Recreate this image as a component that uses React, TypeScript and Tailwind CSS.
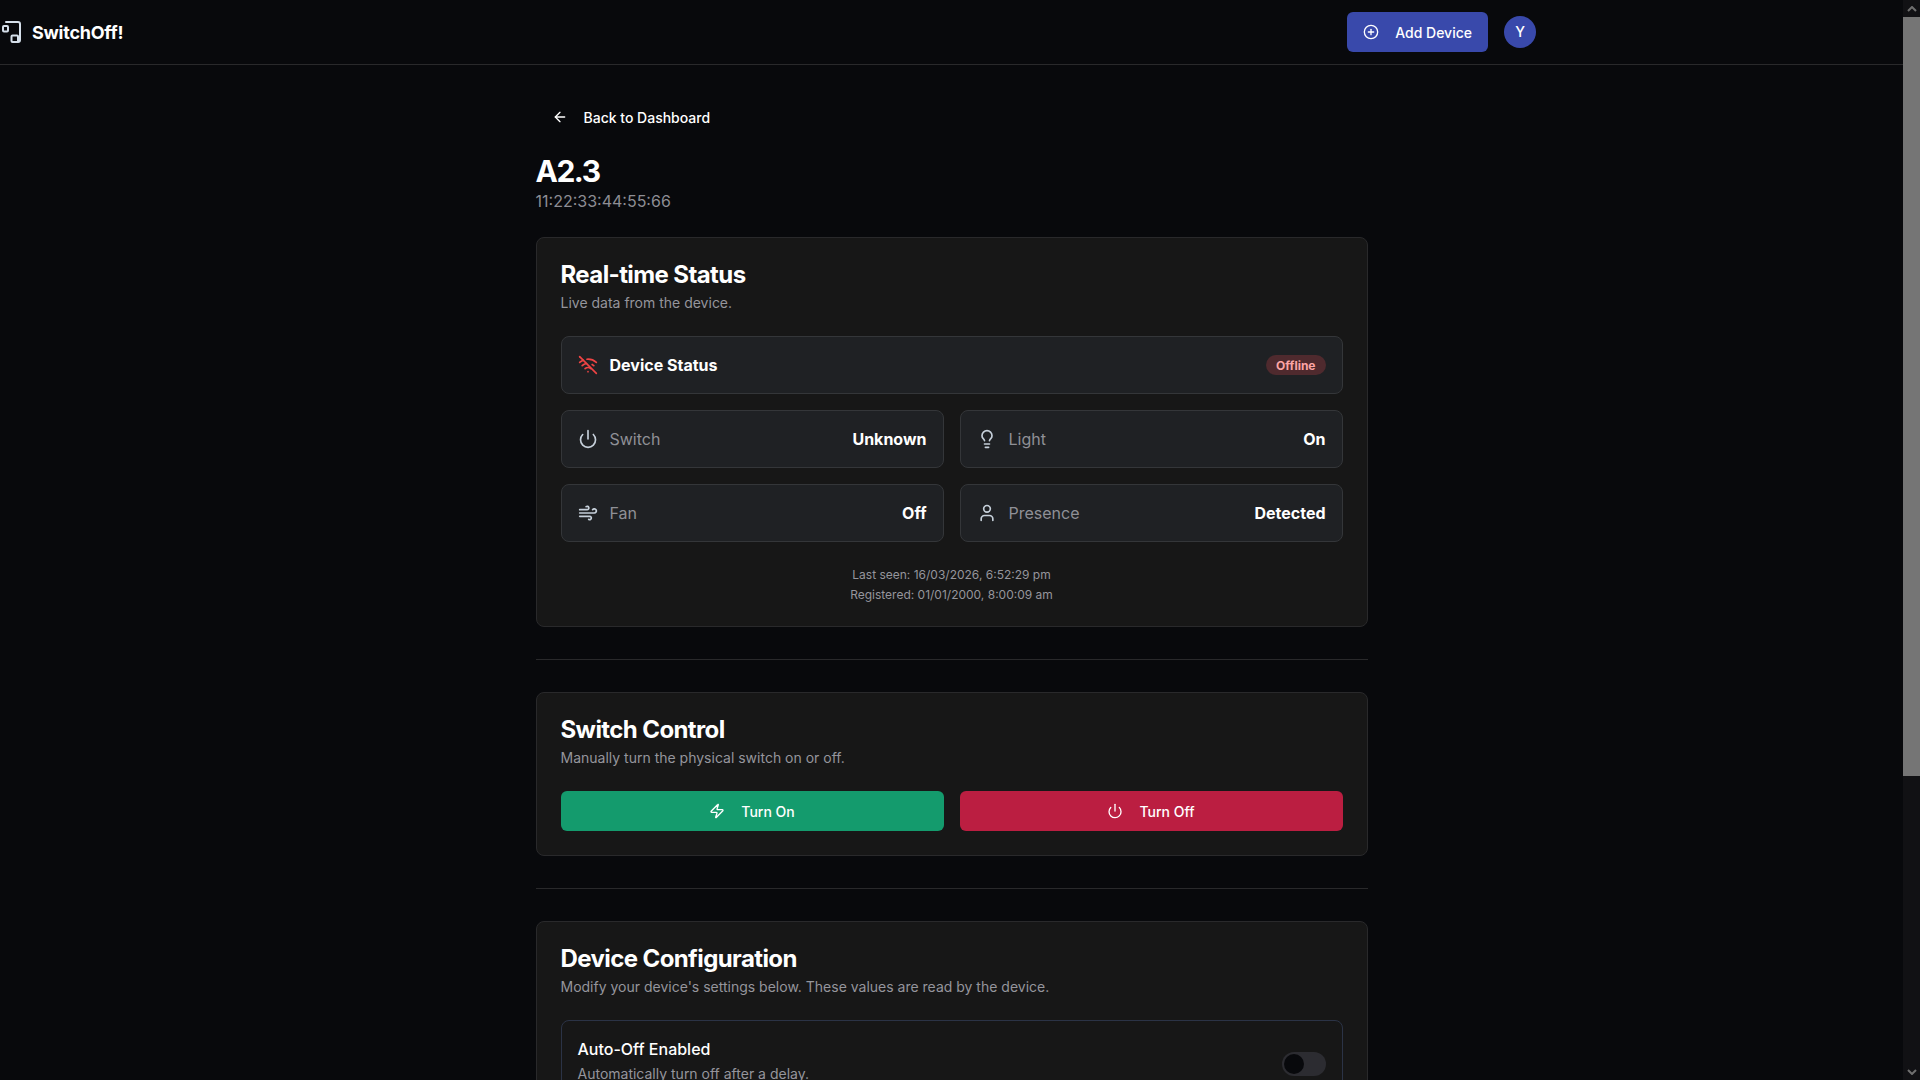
import { ArrowLeft, CirclePlus, Lightbulb, Power, User, Wind, WifiOff, Zap } from "lucide-react";
import type { ReactNode } from "react";

function Logo() {
  return (
    <svg viewBox="0 0 24 24" className="h-6 w-6 text-[#d5dfea]" fill="none" stroke="currentColor" strokeWidth="2" strokeLinecap="round" strokeLinejoin="round">
      <path d="M6 2h12a2 2 0 0 1 2 2v16a2 2 0 0 1-2 2h-1" />
      <rect x="3" y="6" width="5" height="5.5" rx="1" />
      <rect x="11.5" y="15.5" width="6.5" height="6.5" rx="1" />
    </svg>
  );
}

function Card({ title, sub, children }: { title: string; sub: string; children: ReactNode }) {
  return (
    <section className="rounded-lg border border-[#29292b] bg-[#171717] text-white">
      <div className="flex flex-col gap-1.5 px-6 pt-[25px] pb-[23px]">
        <h2 className="text-2xl leading-none font-bold tracking-tight">{title}</h2>
        <p className="text-sm text-[#95959c]">{sub}</p>
      </div>
      <div className="px-6 pb-6">{children}</div>
    </section>
  );
}

function Stat({ icon, label, value }: { icon: ReactNode; label: string; value: string }) {
  return (
    <div className="flex items-center justify-between rounded-lg border border-[#343639] bg-[#1f2124] p-4">
      <div className="flex items-center gap-3">
        {icon}
        <span className="text-[#8f9096]">{label}</span>
      </div>
      <span className="font-bold text-white">{value}</span>
    </div>
  );
}

const iconCls = "h-5 w-5 text-[#c6d0da]";

export default function App() {
  return (
    <div className="flex h-screen overflow-hidden bg-[#08090c] [font-family:Inter,sans-serif]">
      <div className="min-w-0 flex-1 overflow-hidden">
        <header className="border-b border-[#29292b]">
          <div className="flex h-16 w-[1536px] items-center justify-between">
            <div className="flex items-center gap-2">
              <Logo />
              <span className="pt-0.5 text-lg font-bold tracking-[-0.25px] text-white">SwitchOff!</span>
            </div>
            <div className="flex items-center gap-4">
              <button className="flex h-10 items-center gap-4 rounded-md bg-[#3949ab] px-4 text-sm font-medium text-white">
                <CirclePlus className="h-4 w-4" />
                <span className="pt-px">Add Device</span>
              </button>
              <div className="flex h-8 w-8 items-center justify-center rounded-full bg-[#3949ab] text-sm font-medium text-white">Y</div>
            </div>
          </div>
        </header>
        <main className="mx-auto w-full max-w-4xl px-8 py-8">
          <button className="flex h-10 items-center gap-4 rounded-md px-4 text-sm font-medium text-white">
            <ArrowLeft className="h-4 w-4" />
            <span className="pt-0.5">Back to Dashboard</span>
          </button>
          <div className="mt-4 mb-6">
            <h1 className="text-3xl leading-9 font-bold tracking-tighter text-white">A2.3</h1>
            <p className="text-[#8d8d94]">11:22:33:44:55:66</p>
          </div>

          <Card title="Real-time Status" sub="Live data from the device.">
            <div className="flex flex-col gap-4">
              <div className="flex items-center justify-between rounded-lg border border-[#343639] bg-[#1f2124] p-4">
                <div className="flex items-center gap-3">
                  <WifiOff className="h-5 w-5 text-[#ef4444]" />
                  <span className="font-bold text-white">Device Status</span>
                </div>
                <span className="rounded-full bg-[#4f2a2e] px-2.5 pt-[3px] pb-px text-xs font-bold text-[#fca5a5]">Offline</span>
              </div>
              <div className="grid grid-cols-2 gap-4">
                <Stat icon={<Power className={iconCls} />} label="Switch" value="Unknown" />
                <Stat icon={<Lightbulb className={iconCls} />} label="Light" value="On" />
                <Stat icon={<Wind className={iconCls} />} label="Fan" value="Off" />
                <Stat icon={<User className={iconCls} />} label="Presence" value="Detected" />
              </div>
              <div className="mt-[9px] -mb-px flex flex-col gap-1 text-center text-xs text-[#95959c]">
                <p>Last seen: 16/03/2026, 6:52:29 pm</p>
                <p>Registered: 01/01/2000, 8:00:09 am</p>
              </div>
            </div>
          </Card>

          <div className="my-8 h-px bg-[#29292b]" />

          <Card title="Switch Control" sub="Manually turn the physical switch on or off.">
            <div className="grid grid-cols-2 gap-4">
              <button className="flex h-10 items-center justify-center gap-4 rounded-md bg-[#149b6d] text-sm font-medium text-white">
                <Zap className="h-4 w-4" />
                <span className="pt-px">Turn On</span>
              </button>
              <button className="flex h-10 items-center justify-center gap-4 rounded-md bg-[#bb1e41] text-sm font-medium text-white">
                <Power className="h-4 w-4" />
                <span className="pt-px">Turn Off</span>
              </button>
            </div>
          </Card>

          <div className="my-8 h-px bg-[#29292b]" />

          <Card title="Device Configuration" sub="Modify your device's settings below. These values are read by the device.">
            <div className="flex items-center justify-between rounded-lg border border-[#2b3346] p-4">
              <div className="pb-[7px]">
                <p className="font-medium text-white">Auto-Off Enabled</p>
                <p className="mt-[3px] text-sm text-[#95959c]">Automatically turn off after a delay.</p>
              </div>
              <div className="flex h-6 w-11 items-center rounded-full bg-[#2c2c31] px-0.5">
                <div className="h-5 w-5 rounded-full bg-[#08090c]" />
              </div>
            </div>
          </Card>
        </main>
      </div>

      <div className="flex h-full w-[17px] flex-col bg-[#111114]">
        <div className="flex h-[17px] items-center justify-center">
          <svg viewBox="0 0 10 6" className="h-1.5 w-2.5" fill="none" stroke="#6f6f6f" strokeWidth="2"><path d="M1 5l4-4 4 4" /></svg>
        </div>
        <div className="h-[759px] bg-[#757575]" />
        <div className="flex-1" />
        <div className="flex h-[17px] items-center justify-center">
          <svg viewBox="0 0 10 6" className="h-1.5 w-2.5" fill="none" stroke="#6f6f6f" strokeWidth="2"><path d="M1 1l4 4 4-4" /></svg>
        </div>
      </div>
    </div>
  );
}
